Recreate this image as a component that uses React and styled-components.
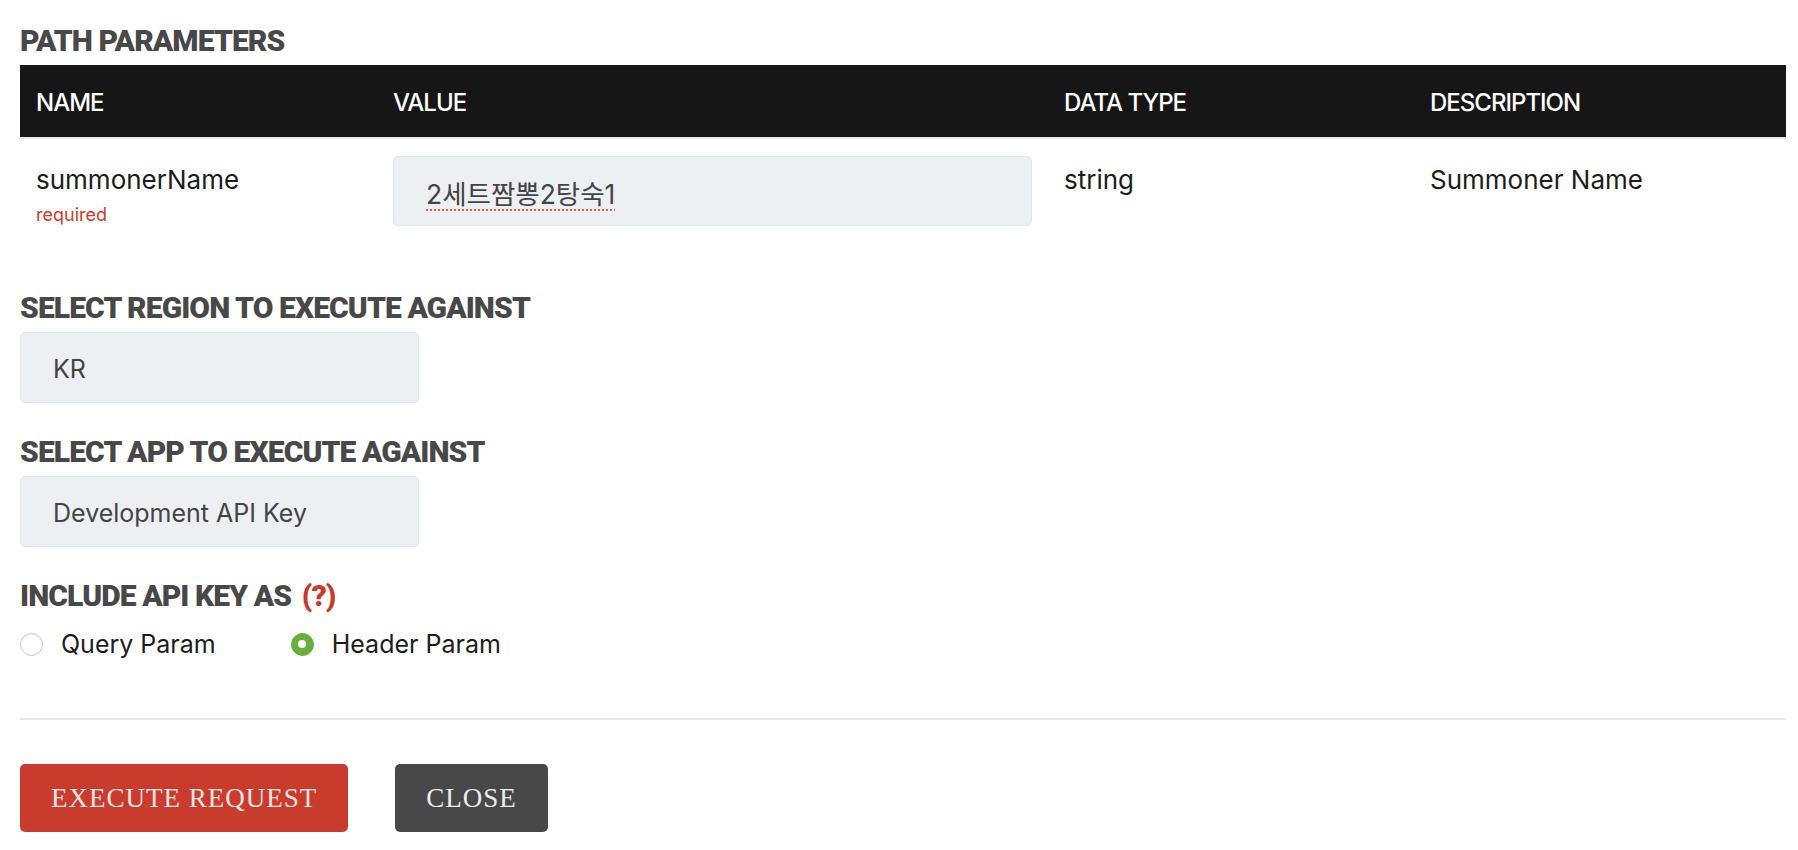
import React from 'react';
import styled, { createGlobalStyle } from 'styled-components';

const GlobalStyle = createGlobalStyle`
  * {
    box-sizing: border-box;
  }
  body {
    margin: 0;
    background: #ffffff;
    font-family: 'Inter', 'Noto Sans', 'Noto Sans CJK KR', sans-serif;
    color: #1c1c1c;
  }
`;

const params = [
  {
    name: 'summonerName',
    required: true,
    value: '2세트짬뽕2탕숙1',
    type: 'string',
    description: 'Summoner Name',
  },
];

const App = () => {
  return (
    <Page>
      <GlobalStyle />
      <SectionTitle>PATH PARAMETERS</SectionTitle>
      <ParamTable>
        <HeadRow>
          <HeadCell>NAME</HeadCell>
          <HeadCell>VALUE</HeadCell>
          <HeadCell>DATA TYPE</HeadCell>
          <HeadCell>DESCRIPTION</HeadCell>
        </HeadRow>
        {params.map((p) => (
          <BodyRow key={p.name}>
            <Cell>
              <ParamName>{p.name}</ParamName>
              {p.required && <Required>required</Required>}
            </Cell>
            <ValueCell>
              <ValueField>
                <Misspelled>{p.value}</Misspelled>
              </ValueField>
            </ValueCell>
            <Cell>{p.type}</Cell>
            <Cell>{p.description}</Cell>
          </BodyRow>
        ))}
      </ParamTable>

      <SectionTitle>SELECT REGION TO EXECUTE AGAINST</SectionTitle>
      <SelectBox>KR</SelectBox>

      <SectionTitle>SELECT APP TO EXECUTE AGAINST</SectionTitle>
      <SelectBox>Development API Key</SelectBox>

      <SectionTitle>
        INCLUDE API KEY AS <Help>(?)</Help>
      </SectionTitle>
      <RadioGroup>
        <RadioOption>
          <RadioDot />
          Query Param
        </RadioOption>
        <RadioOption>
          <RadioDot checked />
          Header Param
        </RadioOption>
      </RadioGroup>

      <Divider />

      <Actions>
        <ActionButton primary>EXECUTE REQUEST</ActionButton>
        <ActionButton>CLOSE</ActionButton>
      </Actions>
    </Page>
  );
};

const Page = styled.div`
  padding: 22px 12px 0 20px;
  min-height: 850px;
`;

const SectionTitle = styled.h3`
  margin: 0 0 6px;
  font-family: 'Roboto', 'Liberation Sans', sans-serif;
  font-weight: 900;
  font-size: 30px;
  line-height: 37px;
  letter-spacing: -0.9px;
  color: #484848;
`;

const Help = styled.span`
  margin-left: 4px;
  color: #c9392b;
`;

const ParamTable = styled.div`
  width: 100%;
  margin-bottom: 45px;
`;

const HeadRow = styled.div`
  display: grid;
  grid-template-columns: 357px 671px 366px 1fr;
  height: 74px;
  background: #161616;
  border-bottom: 2px solid #e4e9ec;
  align-items: center;
  padding-top: 3px;
`;

const HeadCell = styled.div`
  padding: 0 16px;
  color: #ffffff;
  font-size: 24px;
  font-weight: 500;
  letter-spacing: -1px;
`;

const BodyRow = styled.div`
  display: grid;
  grid-template-columns: 357px 671px 366px 1fr;
  align-items: start;
`;

const Cell = styled.div`
  padding: 23px 16px 17px;
  font-size: 26px;
  line-height: 35px;
  color: #1c1c1c;
`;

const ValueCell = styled.div`
  padding: 17px 16px;
`;

const ParamName = styled.div``;

const Required = styled.div`
  margin-top: 6px;
  font-size: 18px;
  line-height: 24px;
  color: #cc3b2c;
`;

const ValueField = styled.div`
  display: flex;
  align-items: center;
  height: 70px;
  padding: 3px 32px 0;
  background: #ecf0f3;
  border: 1px solid #e0e5e9;
  border-radius: 5px;
  font-family: 'Inter', 'Noto Sans CJK KR', sans-serif;
  font-size: 26.5px;
  color: #444444;
`;

const Misspelled = styled.span`
  text-decoration: underline dotted #ea5b4e;
  text-decoration-thickness: 2px;
  text-underline-offset: 5px;
`;

const SelectBox = styled.div`
  display: flex;
  align-items: center;
  width: 399px;
  height: 71px;
  margin-bottom: 30px;
  padding: 2px 32px 0;
  background: #ecf0f3;
  border: 1px solid #e0e5e9;
  border-radius: 5px;
  font-size: 25px;
  color: #444444;
`;

const RadioGroup = styled.div`
  display: flex;
  align-items: center;
  height: 34px;
  margin-top: 13px;
`;

const RadioOption = styled.label`
  display: flex;
  align-items: center;
  gap: 18px;
  margin-right: 75px;
  font-size: 25px;
  color: #1c1c1c;
`;

const RadioDot = styled.span`
  width: 23px;
  height: 23px;
  border-radius: 50%;
  background: ${({ checked }) => (checked ? '#6aae3e' : '#ffffff')};
  border: 1px solid ${({ checked }) => (checked ? '#6aae3e' : '#c9c9c9')};
  box-shadow: ${({ checked }) =>
    checked ? 'none' : 'inset 0 1px 2px rgba(0, 0, 0, 0.08)'};
  display: flex;
  align-items: center;
  justify-content: center;
  &::after {
    content: '';
    display: ${({ checked }) => (checked ? 'block' : 'none')};
    width: 8px;
    height: 8px;
    border-radius: 50%;
    background: #ffffff;
  }
`;

const Divider = styled.hr`
  margin: 57px 0 44px;
  border: 0;
  border-top: 2px solid #e4e9ec;
`;

const Actions = styled.div`
  display: flex;
  gap: 47px;
`;

const ActionButton = styled.button`
  height: 68px;
  padding: 0 31px;
  border: 0;
  border-radius: 5px;
  background: ${({ primary }) => (primary ? '#c93c2d' : '#484848')};
  color: ${({ primary }) => (primary ? '#f6e6e3' : '#ececec')};
  font-family: 'Liberation Serif', serif;
  font-size: 27px;
  letter-spacing: 1px;
  cursor: pointer;
`;

export default App;
